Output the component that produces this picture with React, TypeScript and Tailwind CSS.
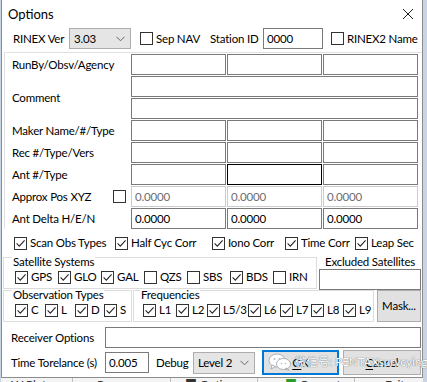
import React from "react";

const Check = ({ on }: { on?: boolean }) => (
  <span className="w-[13px] h-[13px] border border-[#333333] bg-white flex items-center justify-center shrink-0">
    {on && (
      <svg width="11" height="11" viewBox="0 0 11 11">
        <path d="M1.6 5.4 L4.3 8.2 L9.6 2.4" fill="none" stroke="#262626" strokeWidth="1.1" />
      </svg>
    )}
  </span>
);

const CheckItem = ({ label, on, w }: { label: string; on?: boolean; w: string }) => (
  <div className={`flex items-center gap-[3px] shrink-0 ${w}`}>
    <Check on={on} />
    <span className="whitespace-nowrap">{label}</span>
  </div>
);

const Field = ({ value, w = "w-[95px]", dim, dark }: { value?: string; w?: string; dim?: boolean; dark?: boolean }) => (
  <div
    className={`h-[21px] ${w} bg-white border flex items-center px-[3px] shrink-0 ${
      dim ? "border-[#cccccc] text-[#6d6d6d]" : dark ? "border-[#000000]" : "border-[#7a7a7a]"
    }`}
  >
    {value}
  </div>
);

const Chevron = () => (
  <svg width="9" height="6" viewBox="0 0 9 6">
    <path d="M0.5 0.8 L4.5 4.8 L8.5 0.8" fill="none" stroke="#666666" strokeWidth="1" />
  </svg>
);

const Combo = ({ value, w }: { value: string; w: string }) => (
  <div className={`${w} h-[21px] bg-[#e5e5e5] border border-[#adadad] flex items-center justify-between pl-[4px] pr-[5px] shrink-0`}>
    <span>{value}</span>
    <Chevron />
  </div>
);

const Row = ({ label, children }: { label?: React.ReactNode; children: React.ReactNode }) => (
  <div className="flex h-[21px] items-center">
    <div className="w-[126px] pl-[7px] shrink-0 flex items-center">{label}</div>
    <div className="flex gap-[1px]">{children}</div>
  </div>
);

const Triple = ({ vals = ["", "", ""], dim, mid }: { vals?: string[]; dim?: boolean; mid?: boolean }) => (
  <>
    <Field value={vals[0]} dim={dim} />
    <Field value={vals[1]} dim={dim} dark={mid} />
    <Field value={vals[2]} dim={dim} />
  </>
);

const Group = ({ title, className, children }: { title: string; className: string; children: React.ReactNode }) => (
  <div className={`border border-[#dcdcdc] shrink-0 ${className}`}>
    <div className="mt-[-2px] w-fit bg-white px-[1px] leading-[12px] whitespace-nowrap">{title}</div>
    {children}
  </div>
);

const WeChat = () => (
  <svg width="24" height="18" viewBox="0 0 24 18">
    <ellipse cx="9" cy="7.5" rx="8" ry="6.5" fill="#ffffff" stroke="#9aa3ab" strokeWidth="0.8" />
    <path d="M4 12 L3 16 L7.5 13.5 Z" fill="#ffffff" stroke="#9aa3ab" strokeWidth="0.8" />
    <ellipse cx="15.5" cy="11" rx="7" ry="5.5" fill="#ffffff" stroke="#9aa3ab" strokeWidth="0.8" />
    <path d="M19 15 L21 17.5 L17 15.8 Z" fill="#ffffff" stroke="#9aa3ab" strokeWidth="0.8" />
    <circle cx="6.5" cy="6" r="1" fill="#b5bcc2" />
    <circle cx="11.5" cy="6" r="1" fill="#b5bcc2" />
    <circle cx="13.5" cy="10.5" r="0.8" fill="#b5bcc2" />
    <circle cx="17.5" cy="10.5" r="0.8" fill="#b5bcc2" />
  </svg>
);

const App = () => {
  return (
    <div className="w-[427px] h-[382px] overflow-hidden bg-[#c8d5e3] [font-family:Lato,'Noto_Sans_CJK_SC',sans-serif] text-[11.5px] tracking-[-0.2px] text-black leading-[16px]">
      {/* dialog */}
      <div className="ml-[1px] w-[422px] h-[378px] bg-white border-l border-r border-b border-[#8c8c8c] flex flex-col relative">
        {/* title */}
        <div className="h-[28px] flex items-center justify-between pl-[6px] pr-[8px]">
          <span className="text-[13px] tracking-normal">Options</span>
          <svg width="12" height="12" viewBox="0 0 12 12">
            <path d="M1 1 L11 11 M11 1 L1 11" stroke="#1a1a1a" strokeWidth="1" />
          </svg>
        </div>

        {/* rinex row */}
        <div className="h-[21px] flex items-center pl-[11px]">
          <span className="w-[56px] shrink-0 whitespace-nowrap">RINEX Ver</span>
          <Combo value="3.03" w="w-[62px]" />
          <div className="ml-[9px] w-[70px] shrink-0">
            <CheckItem label="Sep NAV" w="w-[70px]" />
          </div>
          <span className="w-[53px] shrink-0 whitespace-nowrap">Station ID</span>
          <Field value="0000" w="w-[60px]" />
          <div className="ml-[8px]">
            <CheckItem label="RINEX2 Name" w="w-[85px]" />
          </div>
        </div>

        {/* header panel */}
        <div className="mt-[3px] ml-[2px] border-t border-l border-[#e1e1e1] pt-[1px] flex flex-col gap-[1px]">
          <Row label="RunBy/Obsv/Agency">
            <Triple />
          </Row>
          <div className="flex">
            <div className="w-[126px] pl-[7px] shrink-0 flex items-center">Comment</div>
            <div className="flex flex-col gap-[1px]">
              <Field w="w-[287px]" />
              <Field w="w-[287px]" />
            </div>
          </div>
          <Row label="Maker Name/#/Type">
            <Triple />
          </Row>
          <Row label="Rec #/Type/Vers">
            <Triple />
          </Row>
          <Row label="Ant #/Type">
            <Triple mid />
          </Row>
          <Row
            label={
              <>
                <span className="whitespace-nowrap">Approx Pos XYZ</span>
                <span className="ml-auto mr-[5px]">
                  <Check />
                </span>
              </>
            }
          >
            <Triple vals={["0.0000", "0.0000", "0.0000"]} dim />
          </Row>
          <Row label="Ant Delta H/E/N">
            <Triple vals={["0.0000", "0.0000", "0.0000"]} />
          </Row>
        </div>

        {/* options checkboxes */}
        <div className="mt-[8px] h-[12px] flex items-center pl-[12px]">
          <CheckItem label="Scan Obs Types" on w="w-[101px]" />
          <CheckItem label="Half Cyc Corr" on w="w-[97px]" />
          <CheckItem label="Iono Corr" on w="w-[73px]" />
          <CheckItem label="Time Corr" on w="w-[70px]" />
          <CheckItem label="Leap Sec" on w="w-[60px]" />
        </div>

        {/* satellites */}
        <div className="mt-[5px] flex items-start pl-[1px]">
          <Group title="Satellite Systems" className="mt-[3px] w-[314px] h-[32px] pl-[8px]">
            <div className="mt-[2px] h-[14px] flex items-center pl-[3px]">
              <CheckItem label="GPS" on w="w-[43px]" />
              <CheckItem label="GLO" on w="w-[43px]" />
              <CheckItem label="GAL" on w="w-[43px]" />
              <CheckItem label="QZS" w="w-[43px]" />
              <CheckItem label="SBS" w="w-[43px]" />
              <CheckItem label="BDS" on w="w-[43px]" />
              <CheckItem label="IRN" w="w-[43px]" />
            </div>
          </Group>
          <div className="ml-[2px] w-[102px] flex flex-col">
            <div className="h-[15px] leading-[15px] text-center whitespace-nowrap">Excluded Satellites</div>
            <Field w="w-[102px]" />
          </div>
        </div>

        {/* obs types / frequencies */}
        <div className="flex items-start pl-[1px]">
          <Group title="Observation Types" className="w-[129px] h-[32px] pl-[8px]">
            <div className="mt-[2px] h-[14px] flex items-center pl-[3px]">
              <CheckItem label="C" on w="w-[30px]" />
              <CheckItem label="L" on w="w-[30px]" />
              <CheckItem label="D" on w="w-[29px]" />
              <CheckItem label="S" on w="w-[22px]" />
            </div>
          </Group>
          <Group title="Frequencies" className="ml-[1px] w-[241px] h-[32px] pl-[6px]">
            <div className="mt-[2px] h-[14px] flex items-center pl-[3px]">
              <CheckItem label="L1" on w="w-[33px]" />
              <CheckItem label="L2" on w="w-[31px]" />
              <CheckItem label="L5/3" on w="w-[41px]" />
              <CheckItem label="L6" on w="w-[32px]" />
              <CheckItem label="L7" on w="w-[31px]" />
              <CheckItem label="L8" on w="w-[32px]" />
              <CheckItem label="L9" on w="w-[30px]" />
            </div>
          </Group>
          <div className="ml-[3px] w-[44px] h-[32px] bg-[#e1e1e1] border border-[#adadad] flex items-center justify-center shrink-0">
            Mask...
          </div>
        </div>

        {/* receiver options */}
        <div className="mt-[5px] h-[21px] flex items-center">
          <span className="w-[103px] pl-[9px] shrink-0 whitespace-nowrap">Receiver Options</span>
          <Field w="w-[316px]" />
        </div>

        {/* bottom row */}
        <div className="mt-[2px] h-[25px] flex items-center">
          <span className="w-[103px] pl-[9px] shrink-0 whitespace-nowrap">Time Torelance (s)</span>
          <Field value="0.005" w="w-[44px]" />
          <span className="ml-[7px] w-[37px] shrink-0">Debug</span>
          <Combo value="Level 2" w="w-[62px] h-[22px]" />
          <div className="ml-[7px] w-[77px] h-[25px] bg-[#e1e1e1] border-2 border-[#0078d7] flex items-center justify-center shrink-0">
            <span className="underline decoration-1 underline-offset-2">O</span>K
          </div>
          <div className="ml-[4px] w-[78px] h-[25px] bg-[#e1e1e1] border border-[#adadad] flex items-center justify-center shrink-0">
            <span className="underline decoration-1 underline-offset-2">C</span>ancel
          </div>
        </div>

        {/* watermark overlay */}
        <div className="absolute left-[266px] top-[353px] flex items-center gap-[3px] pointer-events-none">
          <WeChat />
          <span className="text-white text-[11.5px] tracking-normal whitespace-nowrap [text-shadow:0_0_1px_#6f7880,0_0_1px_#6f7880]">
            微信号: PENTAXsurveying
          </span>
        </div>
      </div>

      {/* window underneath */}
      <div className="ml-[1px] w-[422px] h-[4px] overflow-hidden bg-[#f4f4f4] flex text-[12px] leading-[12px] text-[#333]">
        <div className="w-[72px] pl-[10px] pt-[1px] border-r border-[#c0c0c0]">W Plot</div>
        <div className="w-[98px] pl-[24px] pt-[1px] border-r border-[#c0c0c0]">Process</div>
        <div className="w-[87px] pl-[14px] pt-[1px] border-r border-[#c0c0c0]">■ Options</div>
        <div className="w-[97px] pl-[27px] pt-[1px] border-r border-[#c0c0c0]">
          <span className="text-[#2a9d2a]">■</span> Convert
        </div>
        <div className="pl-[30px] pt-[1px]">Exit</div>
      </div>
    </div>
  );
};

export default App;
